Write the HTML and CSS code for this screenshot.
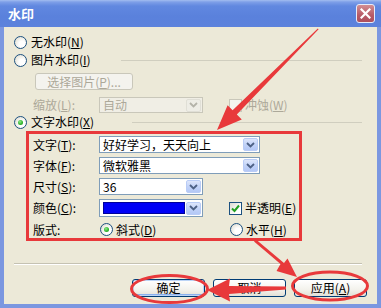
FILE: index.html
```html
<!DOCTYPE html>
<html lang="zh-CN">
<head>
<meta charset="utf-8">
<title>水印</title>
<link rel="stylesheet" href="styles.css">
</head>
<body>
<div class="window">
  <div class="titlebar">
    <span class="title">水印</span>
    <span class="close">
      <svg width="11" height="11" viewBox="0 0 11 11"><path d="M1.5 1.5 L9.5 9.5 M9.5 1.5 L1.5 9.5" stroke="#fff" stroke-width="2.2" stroke-linecap="square"/></svg>
    </span>
  </div>
  <div class="client">
    <div class="opt"><span class="radio"></span><span>无水印(<u>N</u>)</span></div>
    <div class="opt"><span class="radio"></span><span>图片水印(<u>I</u>)</span><span class="gline"></span></div>
    <div class="pic-row"><span class="btn disabled pick">选择图片(<u>P</u>)...</span></div>
    <div class="scale-row">
      <span class="lbl disabled-text">缩放(<u>L</u>):</span>
      <span class="combo disabled scale"><span class="val">自动</span><span class="drop"><svg width="9" height="6" viewBox="0 0 9 6"><path d="M1 1 L4.5 4.5 L8 1" fill="none" stroke="#B4B3A9" stroke-width="1.8"/></svg></span></span>
      <span class="chk-wrap"><span class="chk disabled"></span><span class="disabled-text">冲蚀(<u>W</u>)</span></span>
    </div>
    <div class="opt"><span class="radio on"></span><span>文字水印(<u>X</u>)</span><span class="gline gline2"></span></div>
    <div class="group">
      <span class="lbl">文字(<u>T</u>):</span>
      <span class="combo wide"><span class="val">好好学习，天天向上</span><span class="drop"><svg width="9" height="6" viewBox="0 0 9 6"><path d="M1 1 L4.5 4.5 L8 1" fill="none" stroke="#4D6185" stroke-width="1.8"/></svg></span></span>
      <span class="lbl">字体(<u>F</u>):</span>
      <span class="combo wide"><span class="val">微软雅黑</span><span class="drop"><svg width="9" height="6" viewBox="0 0 9 6"><path d="M1 1 L4.5 4.5 L8 1" fill="none" stroke="#4D6185" stroke-width="1.8"/></svg></span></span>
      <span class="lbl">尺寸(<u>S</u>):</span>
      <span class="combo"><span class="val">36</span><span class="drop"><svg width="9" height="6" viewBox="0 0 9 6"><path d="M1 1 L4.5 4.5 L8 1" fill="none" stroke="#4D6185" stroke-width="1.8"/></svg></span></span>
      <span></span><span></span>
      <span class="lbl">颜色(<u>C</u>):</span>
      <span class="combo color"><span class="swatch"></span><span class="drop"><svg width="9" height="6" viewBox="0 0 9 6"><path d="M1 1 L4.5 4.5 L8 1" fill="none" stroke="#4D6185" stroke-width="1.8"/></svg></span></span>
      <span></span>
      <span class="chk-wrap"><span class="chk on"><svg width="11" height="11" viewBox="0 0 11 11"><path d="M2 5.5 L4.5 8 L9 2.5" fill="none" stroke="#21A121" stroke-width="2"/></svg></span><span>半透明(<u>E</u>)</span></span>
      <span class="lbl">版式:</span>
      <span class="opt2"><span class="radio on"></span><span>斜式(<u>D</u>)</span></span>
      <span></span>
      <span class="opt2"><span class="radio"></span><span>水平(<u>H</u>)</span></span>
    </div>
    <div class="sep"></div>
    <div class="buttons">
      <span class="btn default">确定</span>
      <span class="btn">取消</span>
      <span class="btn">应用(<u>A</u>)</span>
    </div>
  </div>
  <svg class="annot" width="381" height="308" viewBox="0 0 381 308">
    <g fill="#E8393B">
      <polygon points="318.6,29.2 236.8,114.4 241.8,119.4 217,130 227.6,105.2 232.6,110.2 317.8,28.4"/>
      <polygon points="254,241.5 280.5,264 276.5,271 297,277 287.5,258.5 284,263 256,239.5"/>
      <polygon points="286,286.5 229,286 230,278.5 207,290 230,301.5 229,294 286,289.5"/>
    </g>
    <g fill="none" stroke="#E8393B" stroke-width="3">
      <ellipse cx="169.5" cy="289" rx="38" ry="13.5"/>
      <ellipse cx="330" cy="286" rx="37.5" ry="14"/>
    </g>
  </svg>
</div>
</body>
</html>
```
FILE: styles.css
```css
* { box-sizing: border-box; }
html, body { margin: 0; padding: 0; }
body {
  font-family: "Noto Sans CJK SC", "Liberation Sans", sans-serif;
  font-size: 12px;
  color: #000;
  background: #fff;
}
u { text-decoration: underline; text-underline-offset: 1px; }

.window {
  position: relative;
  width: 381px;
  height: 308px;
  background: #7B97E0;
  display: flex;
  flex-direction: column;
  overflow: hidden;
}
.titlebar {
  height: 27px;
  flex: none;
  display: flex;
  align-items: center;
  justify-content: space-between;
  padding: 0 6px 0 8px;
  background: linear-gradient(to bottom, #A3BDF0 0, #7E9FE8 2px, #6188E0 6px, #5A81DC 60%, #5C82DC 100%);
}
.title {
  color: #fff;
  font-weight: bold;
  font-size: 13px;
  line-height: 1;
}
.close {
  width: 19px;
  height: 19px;
  border: 1px solid #E6ECFA;
  border-radius: 3px;
  background: linear-gradient(to bottom, #D28E93, #B75A66 60%, #AE4F5C);
  display: flex;
  align-items: center;
  justify-content: center;
}

.client {
  flex: 1;
  margin: 0 4px 4px;
  background: #ECE9D8;
  padding: 6px 10px 6px;
  display: flex;
  flex-direction: column;
  min-height: 0;
}

.opt {
  height: 18px;
  flex: none;
  display: flex;
  align-items: center;
  gap: 4px;
  line-height: 1;
}
.radio {
  width: 13px;
  height: 13px;
  flex: none;
  border: 1px solid #1C5180;
  border-radius: 50%;
  background: radial-gradient(circle at 65% 65%, #FFFFFF 30%, #E6E4DA 75%, #D6D3C4 100%);
  display: inline-flex;
  align-items: center;
  justify-content: center;
}
.radio.on::after {
  content: "";
  width: 5px;
  height: 5px;
  border-radius: 50%;
  background: radial-gradient(circle at 40% 35%, #8EEA89, #2DB22A 60%, #1E8E1C);
}
.gline {
  flex: 1;
  height: 0;
  border-top: 1px solid #D0CEBF;
  margin-left: 26px;
  margin-right: 5px;
}
.gline2 { margin-left: 34px; }

.pic-row {
  height: 17px;
  margin-top: 4px;
  padding-left: 21px;
  display: flex;
  flex: none;
}
.btn {
  height: 18px;
  width: 73px;
  border: 1px solid #003C74;
  border-radius: 3px;
  background: linear-gradient(to bottom, #FFFFFF, #F3F2EC 60%, #E2E0D6);
  display: inline-flex;
  align-items: center;
  justify-content: center;
  line-height: 1;
}
.btn.default {
  box-shadow: inset 0 0 0 1px #BCD4F6, inset 0 -1px 0 1px #8AB0EE;
}
.btn.disabled {
  border-color: #C9C7BA;
  background: #F4F3EE;
  color: #ACA899;
}
.pick { width: 98px; height: 17px; }
.disabled-text { color: #ACA899; }

.scale-row {
  height: 16px;
  margin-top: 7px;
  padding-left: 19px;
  display: flex;
  align-items: center;
  flex: none;
}
.lbl {
  width: 66px;
  flex: none;
  line-height: 1;
  display: flex;
  align-items: center;
}
.combo {
  width: 104px;
  height: 17px;
  border: 1px solid #7F9DB9;
  background: #fff;
  display: flex;
  align-items: center;
  justify-content: space-between;
  padding: 1px;
}
.combo .val {
  padding-left: 2px;
  line-height: 1;
  white-space: nowrap;
}
.combo .drop {
  width: 15px;
  height: 13px;
  flex: none;
  border: 1px solid #B9CCF6;
  border-radius: 2px;
  background: linear-gradient(to bottom, #DDE6FB, #C2D3F8 50%, #B4C8F6);
  display: flex;
  align-items: center;
  justify-content: center;
}
.combo.disabled {
  height: 16px;
  border-color: #C9C7BA;
  background: #F0EEE5;
  color: #ACA899;
}
.combo.disabled .drop {
  border-color: #E0DFD6;
  background: #EEEDE6;
}
.chk-wrap {
  display: flex;
  align-items: center;
  gap: 3px;
  line-height: 1;
}
.scale-row .chk-wrap { margin-left: 26px; }
.chk {
  width: 13px;
  height: 13px;
  flex: none;
  border: 1px solid #1C5180;
  background: linear-gradient(135deg, #DCDAD0, #FFFFFF 70%);
  display: flex;
  align-items: center;
  justify-content: center;
}
.chk.disabled {
  border-color: #C9C7BA;
  background: #F4F3EE;
}

.group {
  margin-left: 12px;
  width: 276px;
  height: 110px;
  flex: none;
  border: 3px solid #E8393B;
  padding: 2px 0 0 4px;
  display: grid;
  grid-template-columns: 66px 104px 26px 1fr;
  grid-template-rows: 17px 17px 17px 18px 17px;
  row-gap: 4px;
  align-items: center;
}
.group .combo.wide {
  grid-column: 2 / 5;
  width: 161px;
}
.group .combo.color {
  height: 18px;
  padding: 2px 1px 2px 3px;
}
.swatch {
  width: 82px;
  height: 12px;
  background: #0000F6;
  border: 1px solid #00009A;
}
.opt2 {
  display: flex;
  align-items: center;
  gap: 3px;
  line-height: 1;
  padding-left: 1px;
}

.sep {
  margin-top: 22px;
  height: 2px;
  flex: none;
  border-top: 1px solid #C5C2B2;
  border-bottom: 1px solid #FFFFFF;
  margin-right: 5px;
}
.buttons {
  margin-top: 14px;
  display: flex;
  justify-content: flex-end;
  gap: 8px;
  flex: none;
}

.annot {
  position: absolute;
  left: 0;
  top: 0;
  pointer-events: none;
}
```
